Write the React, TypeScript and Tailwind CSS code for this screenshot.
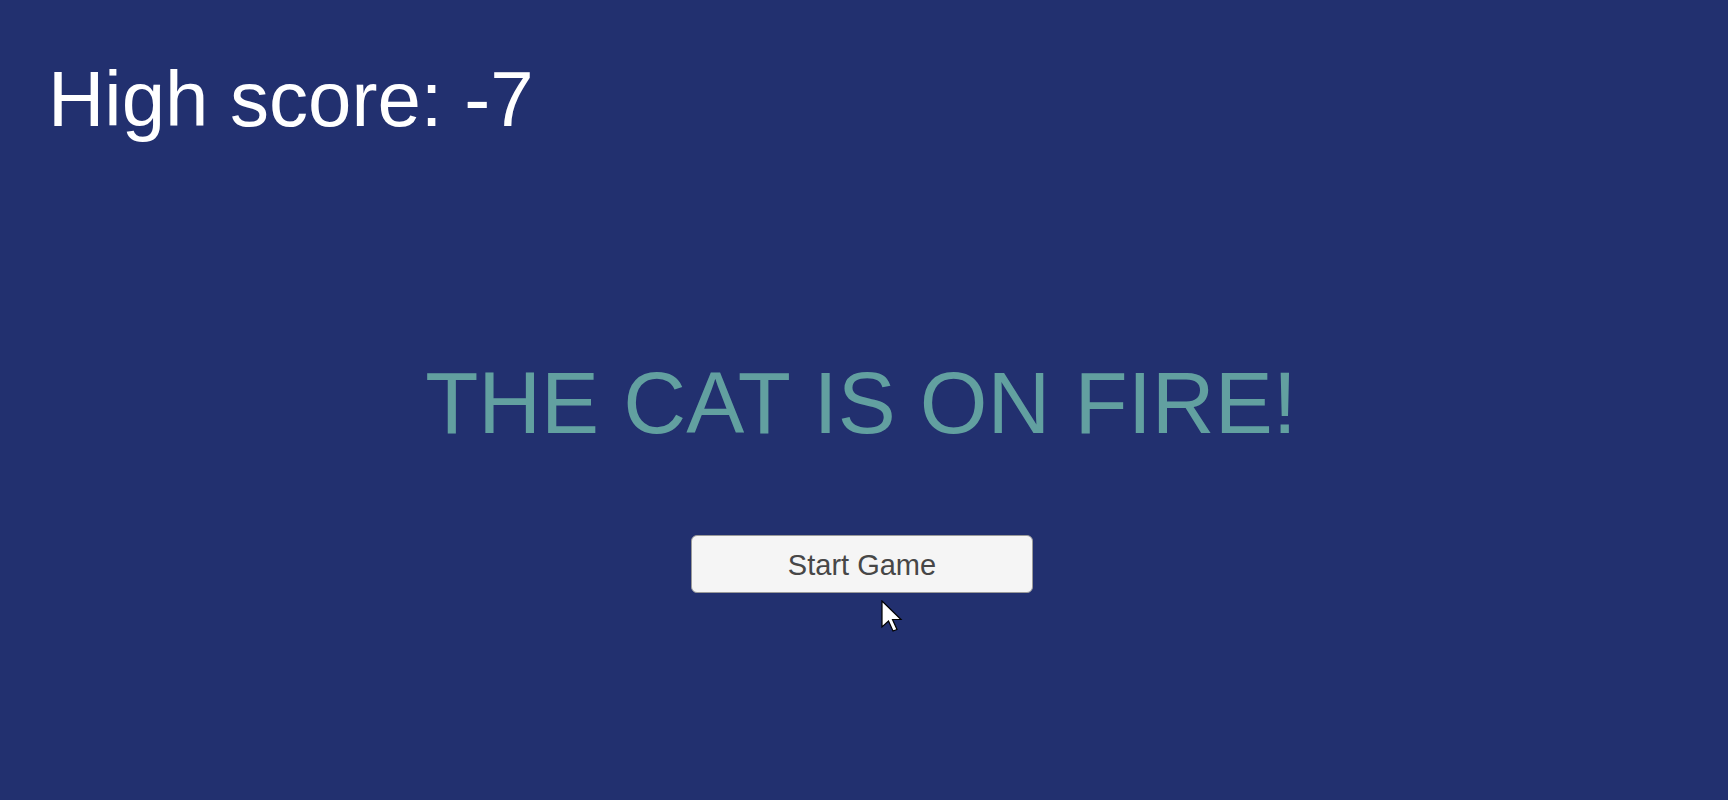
export default function App() {
  return (
    <div
      className="relative flex h-[800px] w-full flex-col overflow-hidden bg-[#22306f]"
      style={{ fontFamily: '"Liberation Sans", Arial, sans-serif' }}
    >
      <header className="pl-[48px] pt-[60px]">
        <h1 className="text-[78px] leading-none font-normal text-white">High score: -7</h1>
      </header>

      <main className="flex flex-col items-center pr-[6px]">
        <h2 className="mt-[221px] text-[87px] leading-none font-normal text-[#62a0a0]">
          THE CAT IS ON FIRE!
        </h2>
        <button
          type="button"
          className="mt-[89px] ml-[2px] h-[58px] w-[342px] rounded-[6px] border border-[#9a9a9a] bg-[#f5f5f5] pt-[3px] text-[29px] text-[#474747]"
        >
          Start Game
        </button>
      </main>

      {/* mouse pointer captured in the screenshot */}
      <svg
        className="absolute left-[881px] top-[600px]"
        width="24"
        height="36"
        viewBox="0 0 24 36"
      >
        <path
          d="M1 1 L1 27 L7.5 21 L12 31 L16 29.5 L11.5 19.5 L20 19.5 Z"
          fill="#ffffff"
          stroke="#000000"
          strokeWidth="1.2"
          strokeLinejoin="miter"
        />
      </svg>
    </div>
  );
}
